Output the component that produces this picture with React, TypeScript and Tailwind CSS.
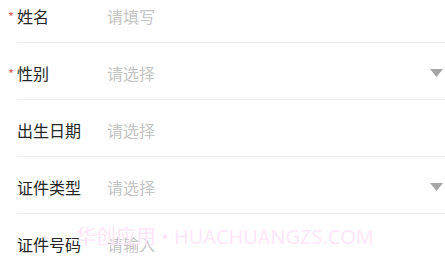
const fields = [
  { label: '姓名', placeholder: '请填写', required: true, select: false },
  { label: '性别', placeholder: '请选择', required: true, select: true },
  { label: '出生日期', placeholder: '请选择', required: false, select: false },
  { label: '证件类型', placeholder: '请选择', required: false, select: true },
  { label: '证件号码', placeholder: '请输入', required: false, select: false },
];

export default function App() {
  return (
    <div
      className="relative h-[259px] w-[445px] overflow-hidden bg-white"
      style={{ fontFamily: '"Noto Sans CJK SC", "Noto Sans", sans-serif' }}
    >
      <div className="-mt-[14px]">
        {fields.map(({ label, placeholder, required, select }) => (
          <div key={label} className="pl-[17px]">
            <div className="flex h-[57px] items-center border-b border-[#eeeeee] pt-[3px] pr-[2px]">
              <div className="relative w-[90px] text-[16px] leading-none text-[#262626]">
                {required && (
                  <span className="absolute -left-[9px] top-[2px] text-[13px] text-[#d9605e]">*</span>
                )}
                {label}
              </div>
              <div className="flex-1 text-[16px] leading-none text-[#c4c4c4]">{placeholder}</div>
              {select && (
                <svg width="13" height="8" viewBox="0 0 13 8" className="mt-[1px]">
                  <path d="M0 0 L13 0 L6.5 8 Z" fill="#a6a6a6" />
                </svg>
              )}
            </div>
          </div>
        ))}
      </div>
      <div
        className="pointer-events-none absolute left-[76px] top-[222px] whitespace-nowrap text-[20px] text-[#fde6f7]"
        style={{ fontFamily: '"Open Sans", "Noto Sans CJK SC", sans-serif' }}
      >
        华创应用 • HUACHUANGZS.COM
      </div>
    </div>
  );
}
